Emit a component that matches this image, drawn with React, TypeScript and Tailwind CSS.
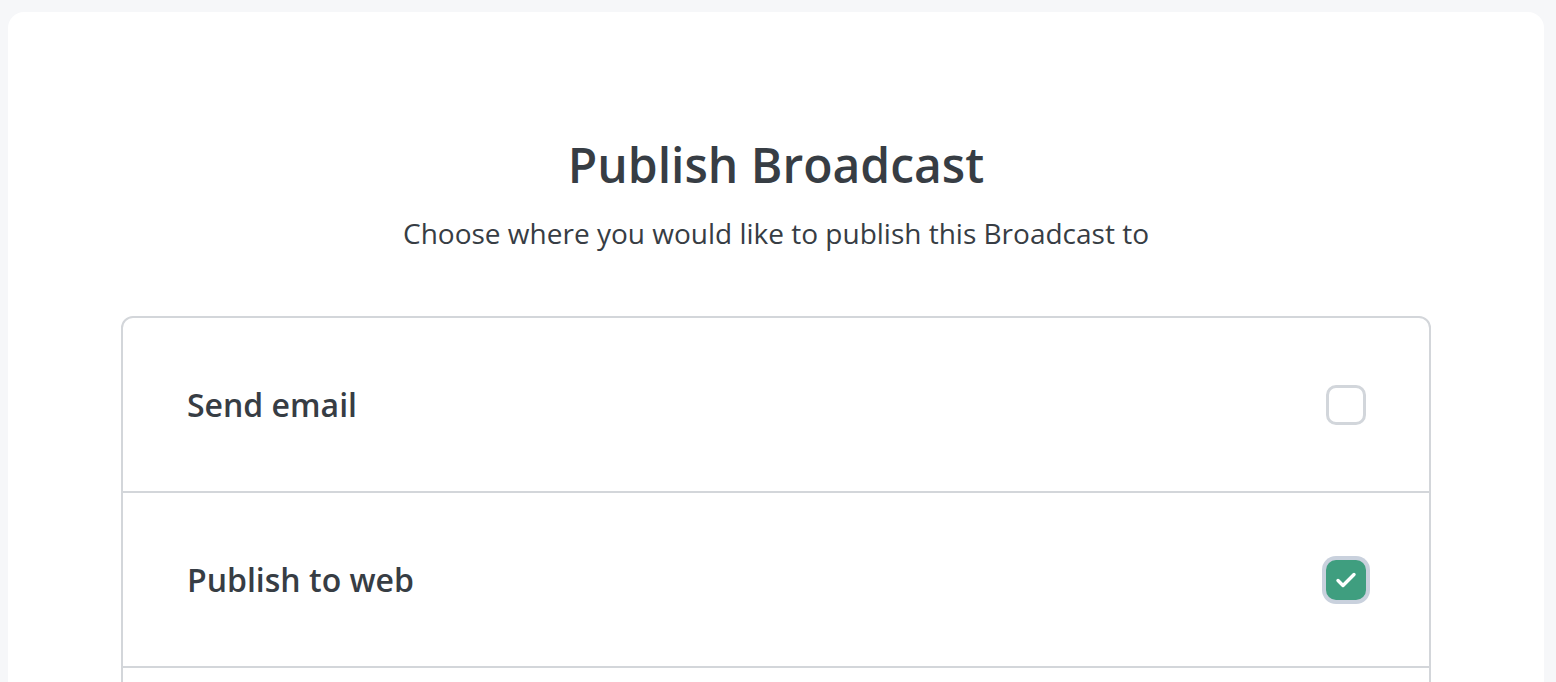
import React, { useState } from 'react';

const Checkbox: React.FC<{ checked: boolean; onChange: () => void }> = ({ checked, onChange }) => (
  <button
    onClick={onChange}
    className={`flex h-[40px] w-[40px] items-center justify-center rounded-[10px] ${
      checked ? 'bg-[#3f9e7f] ring-4 ring-[#c9d1dd]' : 'border-[3px] border-[#d2d6db] bg-white'
    }`}
  >
    {checked && (
      <svg width="24" height="24" viewBox="0 0 24 24" fill="none" stroke="white" strokeWidth="3.4" strokeLinecap="round" strokeLinejoin="round">
        <path d="M4 12.5l5 5L20 6.5" />
      </svg>
    )}
  </button>
);

const App: React.FC = () => {
  const [options, setOptions] = useState({ email: false, web: true, other: false });

  const rows = [
    { key: 'email' as const, label: 'Send email' },
    { key: 'web' as const, label: 'Publish to web' },
    { key: 'other' as const, label: 'Share on social' },
  ];

  return (
    <div className="min-h-screen bg-[#f6f7f9] pl-2 pr-3 pt-3" style={{ fontFamily: '"Open Sans", sans-serif' }}>
      <div className="rounded-t-2xl bg-white px-[113px] pb-10 pt-[129px] text-[#373d44]">
        <h1 className="text-center text-[48px] font-semibold leading-[48px]">Publish Broadcast</h1>
        <p className="mt-[26px] text-center text-[28px] leading-[36px]">
          Choose where you would like to publish this Broadcast to
        </p>

        <div className="mt-[65px] overflow-hidden rounded-xl border-2 border-[#d3d6da]">
          {rows.map((row, i) => (
            <div
              key={row.key}
              className={`flex items-center justify-between pl-[64px] pr-[63px] ${
                i > 0 ? 'h-[175px] border-t-2 border-[#d3d6da]' : 'h-[173px]'
              }`}
            >
              <span className="text-[32px] font-semibold">{row.label}</span>
              <Checkbox
                checked={options[row.key]}
                onChange={() => setOptions({ ...options, [row.key]: !options[row.key] })}
              />
            </div>
          ))}
        </div>
      </div>
    </div>
  );
};

export default App;
